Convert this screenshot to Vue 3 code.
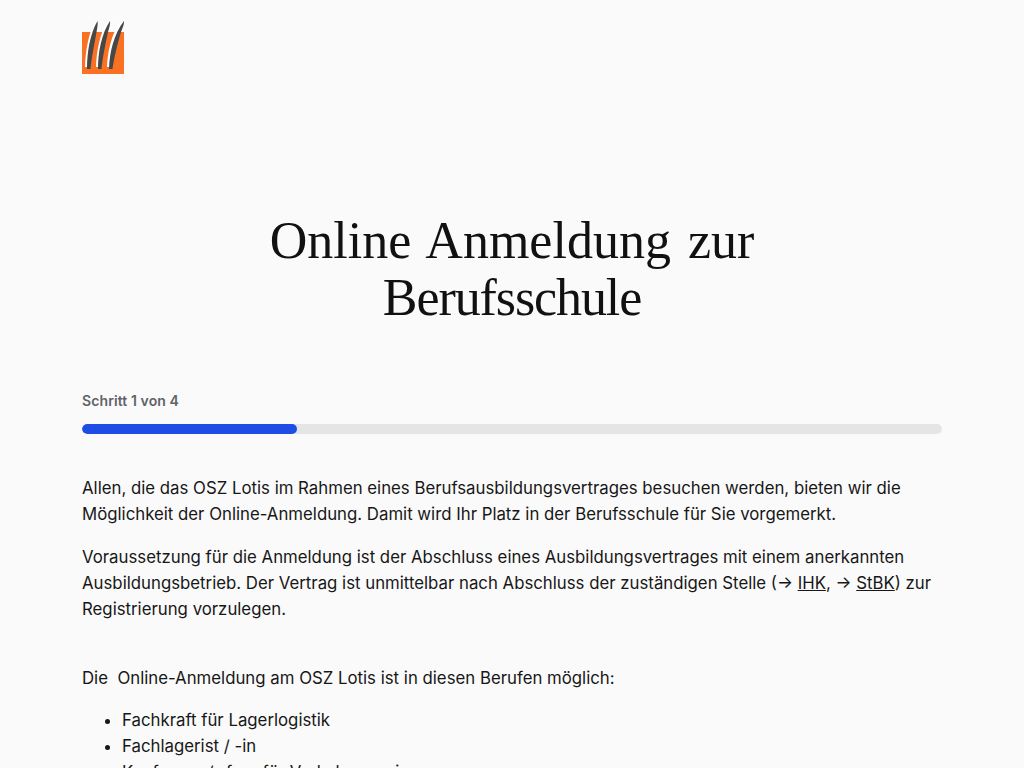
<template>
  <div class="page">
    <header class="site-header">
      <svg class="logo" width="44" height="54" viewBox="0 0 44 54" aria-label="OSZ Lotis">
        <rect x="0" y="12" width="42" height="42" fill="#f97223" />
        <g fill="#fff">
          <path d="M3 47C3.5 31 6.5 13 13 2L15 3C10 16 7.5 31 6.5 47Z" />
          <path d="M14 47C14.5 31 18 13 25 2L27 3C21.5 16 18.5 31 17.5 47Z" />
          <path d="M25 47C25.5 31 30 13 38 2L40 3C33.5 16 29.5 31 28.5 47Z" />
        </g>
        <g fill="#474747">
          <path d="M5 49C5 32 8 14 15.5 1C16 3 15.5 7 14.5 12C12.5 24 9.5 38 8.5 49Z" />
          <path d="M16 49C16 32 19.5 14 28 1C28.5 3 27.5 7 26 12C23.5 24 20.5 38 19.5 49Z" />
          <path d="M27 49C27.5 32 32 14 42 1C42.5 3 41 7 39 12C35.5 24 32 38 30.5 49Z" />
        </g>
      </svg>
    </header>

    <h1 class="title">Online Anmeldung zur <span class="title-second">Berufsschule</span></h1>

    <div class="progress-label">Schritt {{ step }} von {{ total }}</div>
    <div class="progress-track">
      <div class="progress-fill" :style="{ width: fillWidth }"></div>
    </div>

    <div class="content">
      <p>Allen, die das OSZ Lotis im Rahmen eines Berufsausbildungsvertrages besuchen werden, bieten wir die Möglichkeit der Online-Anmeldung. Damit wird Ihr Platz in der Berufsschule für Sie vorgemerkt.</p>
      <p>Voraussetzung für die Anmeldung ist der Abschluss eines Ausbildungsvertrages mit einem anerkannten Ausbildungsbetrieb. Der Vertrag ist unmittelbar nach Abschluss der zuständigen Stelle (→ <a href="#">IHK</a>, → <a href="#">StBK</a>) zur Registrierung vorzulegen.</p>
      <p class="lead">Die&nbsp; Online-Anmeldung am OSZ Lotis ist in diesen Berufen möglich:</p>
      <ul>
        <li v-for="job in jobs" :key="job">{{ job }}</li>
      </ul>
    </div>
  </div>
</template>

<script setup>
import { computed } from 'vue'

const step = 1
const total = 4
const fillWidth = computed(() => (step / total) * 100 + '%')

const jobs = [
  'Fachkraft für Lagerlogistik',
  'Fachlagerist / -in',
  'Kaufmann / -frau für Verkehrsservice'
]
</script>

<style>
html, body {
  margin: 0;
  background: #fafafa;
  overflow: hidden;
}
</style>

<style scoped>
.page {
  width: 860px;
  height: 768px;
  margin: 0 auto;
  overflow: hidden;
  font-family: Inter, "Liberation Sans", sans-serif;
  font-size: 16.8px;
  line-height: 26px;
  color: #171717;
}

.site-header {
  padding-top: 20px;
  height: 54px;
}

.logo {
  display: block;
}

.title {
  margin: 138px auto 0;
  max-width: 560px;
  text-align: center;
  font-family: "Liberation Serif", serif;
  font-size: 52px;
  line-height: 57px;
  font-weight: 400;
  word-spacing: 4px;
  color: #111;
}

.title-second {
  letter-spacing: -1.1px;
}

.progress-label {
  margin-top: 65px;
  font-size: 14px;
  line-height: 20px;
  font-weight: 600;
  letter-spacing: 0.1px;
  color: #5f6368;
}

.progress-track {
  margin-top: 13px;
  height: 10px;
  border-radius: 5px;
  background: #e5e5e5;
  overflow: hidden;
}

.progress-fill {
  height: 100%;
  border-radius: 5px;
  background: #1e4de6;
}

.content {
  margin-top: 41px;
}

.content p {
  margin: 0 0 17px;
}

.content a {
  color: inherit;
  text-decoration: underline;
}

.content .lead {
  margin-top: 43px;
  margin-bottom: 16px;
}

.content ul {
  margin: 0;
  padding-left: 40px;
}
</style>
